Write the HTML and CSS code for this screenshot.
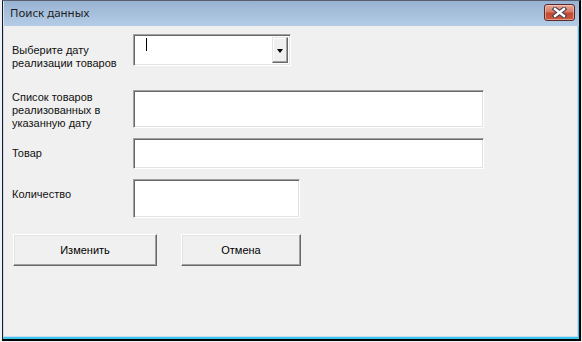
FILE: index.html
```html
<!DOCTYPE html>
<html lang="ru">
<head>
    <meta charset="UTF-8">
    <title>Поиск данных</title>
    <link rel="stylesheet" href="styles.css">
</head>
<body>
    <div class="window">
        <!-- Title bar -->
        <div class="title-bar">
            <span class="title-text">Поиск данных</span>
            <div class="close-btn">
                <svg width="15" height="11" viewBox="0 0 15 11">
                    <path d="M3 2 L12 9 M12 2 L3 9" stroke="#3c3c50" stroke-width="4.5" stroke-linecap="square" />
                    <path d="M3 2 L12 9 M12 2 L3 9" stroke="#fff" stroke-width="2.4" stroke-linecap="square" />
                </svg>
            </div>
        </div>

        <div class="frame">
            <div class="content">
                <!-- Date -->
                <div class="row row-date">
                    <label class="field-label label-date">Выберите дату<br>реализации товаров</label>
                    <div class="combo">
                        <span class="caret"></span>
                        <div class="combo-btn"><span class="arrow"></span></div>
                    </div>
                </div>

                <!-- List -->
                <div class="row row-list">
                    <label class="field-label label-list">Список товаров<br>реализованных в<br>указанную дату</label>
                    <div class="text-box list-box"></div>
                </div>

                <!-- Product -->
                <div class="row row-product">
                    <label class="field-label label-product">Товар</label>
                    <div class="text-box product-box"></div>
                </div>

                <!-- Quantity -->
                <div class="row row-qty">
                    <label class="field-label label-qty">Количество</label>
                    <div class="text-box qty-box"></div>
                </div>

                <div class="buttons">
                    <div class="button btn-change">Изменить</div>
                    <div class="button btn-cancel">Отмена</div>
                </div>
            </div>
        </div>
    </div>
</body>
</html>
```

FILE: styles.css
```css
/* General */
body {
    margin: 0;
    background-color: #eef2f6;
    font-family: "Liberation Sans", Arial, sans-serif;
    font-size: 11px;
    color: #000;
}

.window {
    margin: 0 1px 0 2px;
    height: 338px;
    border-top: 1px solid #5a6070;
    border-left: 1px solid #1a1a1a;
    border-right: 2px solid #000;
    border-bottom: 2px solid #000;
    display: flex;
    flex-direction: column;
    background-color: #b9d1ea;
}

/* Title bar */
.title-bar {
    height: 25px;
    display: flex;
    align-items: center;
    justify-content: space-between;
    padding: 0 4px 0 6px;
    background: linear-gradient(to bottom, #98b3d2, #b4cce6);
    border-left: 1px solid #d8e6f4;
}

.title-text {
    font-family: "Noto Sans", "Open Sans", sans-serif;
    font-size: 11.5px;
    color: #1e1e1e;
    margin-top: -2px;
}

.close-btn {
    width: 29px;
    height: 15px;
    border: 1px solid #5a2a2a;
    border-radius: 3px;
    margin-top: -3px;
    display: flex;
    align-items: center;
    justify-content: center;
    background: linear-gradient(to bottom, #e8a898 0%, #d67a66 45%, #c44a32 55%, #c85a40 100%);
    box-shadow: inset 0 0 0 1px rgba(255, 220, 210, 0.5);
}

/* Frame and content */
.frame {
    flex: 1;
    display: flex;
    padding: 0 1px 1px 1px;
    background-color: #c8dcf0;
    border-right: 1px solid #3cc4ec;
    border-bottom: 2px solid #3cc4ec;
}

.content {
    flex: 1;
    background-color: #f0f0f0;
    padding: 8px 0 0 8px;
}

.row {
    display: flex;
    align-items: flex-start;
}

.field-label {
    width: 121px;
    line-height: 13px;
    flex-shrink: 0;
    color: #111;
}

.label-date { margin-top: 10px; line-height: 12.5px; }
.label-list { margin-top: 1px; }
.label-product { margin-top: 9px; }
.label-qty { margin-top: 9px; }

.row-date { height: 32px; }
.row-list { height: 38px; margin-top: 24px; }
.row-product { height: 31px; margin-top: 10px; }
.row-qty { height: 39px; margin-top: 10px; }

/* Sunken fields */
.text-box,
.combo {
    box-sizing: border-box;
    background-color: #fff;
    border: 1px solid;
    border-color: #a0a0a0 #fff #fff #a0a0a0;
    box-shadow: inset 1px 1px 0 #696969, inset -1px -1px 0 #e3e3e3;
}

.list-box { width: 351px; height: 38px; }
.product-box { width: 351px; height: 31px; }
.qty-box { width: 167px; height: 39px; }

.combo {
    width: 158px;
    height: 32px;
    display: flex;
    justify-content: space-between;
    padding: 2px 2px 2px 12px;
}

.caret {
    width: 1px;
    height: 13px;
    margin-top: 1px;
    background-color: #000;
}

.combo-btn {
    width: 16px;
    box-sizing: border-box;
    background-color: #f0f0f0;
    border: 1px solid;
    border-color: #e3e3e3 #696969 #696969 #e3e3e3;
    box-shadow: inset -1px -1px 0 #a0a0a0, inset 1px 1px 0 #fff;
    display: flex;
    align-items: center;
    justify-content: center;
}

.arrow {
    width: 0;
    height: 0;
    border-left: 3px solid transparent;
    border-right: 3px solid transparent;
    border-top: 4px solid #000;
    margin-top: 2px;
}

/* Buttons */
.buttons {
    display: flex;
    gap: 24px;
    margin-top: 16px;
    padding-left: 1px;
}

.button {
    box-sizing: border-box;
    height: 32px;
    display: flex;
    align-items: center;
    justify-content: center;
    background-color: #f0f0f0;
    border: 1px solid;
    border-color: #fff #696969 #696969 #fff;
    box-shadow: inset -1px -1px 0 #a0a0a0, inset 1px 1px 0 #e3e3e3;
}

.btn-change { width: 144px; }
.btn-cancel { width: 120px; }
```
